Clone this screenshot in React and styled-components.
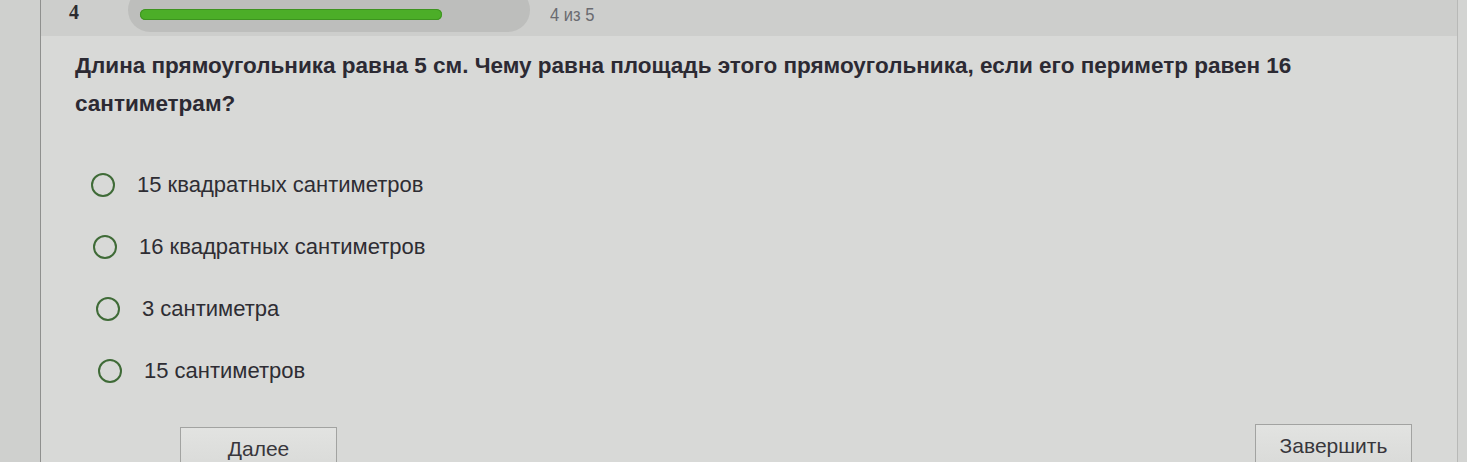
import React from "react";
import styled, { createGlobalStyle } from "styled-components";

const Global = createGlobalStyle`
  html, body { margin: 0; padding: 0; }
  body {
    background: #d3d4d2;
    font-family: "Liberation Sans", Arial, sans-serif;
    overflow: hidden;
  }
`;

const Page = styled.div`
  display: flex;
  width: 1467px;
  height: 462px;
  overflow: hidden;
`;

const Margin = styled.div`
  width: 40px;
  flex: none;
  background: #cfd0ce;
  border-right: 1px solid #8f908e;
`;

const Main = styled.div`
  flex: 1;
  display: flex;
  flex-direction: column;
  background: #d8d9d7;
  border-right: 1px solid #b8b9b7;
  margin-right: 9px;
`;

const TopBar = styled.div`
  height: 36px;
  flex: none;
  display: flex;
  align-items: flex-start;
  background: #cdcecc;
  padding-left: 28px;
`;

const Number = styled.div`
  width: 59px;
  font-family: "Liberation Serif", "Times New Roman", serif;
  font-weight: bold;
  font-size: 20px;
  color: #2b2b30;
  line-height: 24px;
`;

const Track = styled.div`
  width: 402px;
  height: 44px;
  margin-top: -12px;
  border-radius: 22px;
  background: #bdbebc;
  display: flex;
  align-items: flex-start;
  padding: 21px 12px 0;
  box-sizing: border-box;
`;

const Fill = styled.div`
  height: 11px;
  border-radius: 6px;
  background: #4cae28;
  box-shadow: inset 0 0 0 1px #3e9420;
`;

const Counter = styled.div`
  margin-left: 20px;
  font-size: 18px;
  color: #6a6b70;
  line-height: 30px;
  transform: scaleX(0.92);
  transform-origin: left;
`;

const Question = styled.div`
  width: 1330px;
  padding: 11px 0 0 34px;
  font-weight: bold;
  font-size: 22.5px;
  line-height: 38px;
  color: #2c2a33;
`;

const Options = styled.div`
  display: flex;
  flex-direction: column;
  gap: 38px;
  padding: 50px 0 0 50px;
`;

const Option = styled.label`
  display: flex;
  align-items: center;
  gap: 22px;
  height: 24px;
  padding-left: ${(p) => p.$shift}px;
  font-size: 22px;
  color: #2e2d33;
  cursor: pointer;
`;

const Radio = styled.span`
  width: 20px;
  height: 20px;
  border-radius: 50%;
  border: 2px solid #3f6b37;
  flex: none;
`;

const Buttons = styled.div`
  display: flex;
  justify-content: space-between;
  align-items: flex-start;
  padding: 41px 45px 0 139px;
`;

const Button = styled.button`
  width: 157px;
  height: 44px;
  margin-top: ${(p) => p.$top}px;
  background: linear-gradient(#e2e3e1, #d9dad8);
  border: 1px solid #a2a3a1;
  border-radius: 0;
  font-family: "Liberation Sans", Arial, sans-serif;
  font-size: 21px;
  color: #38373c;
  padding: 10px 0 0;
  line-height: 22px;
  display: flex;
  justify-content: center;
  align-items: flex-start;
`;

const answers = [
  { text: "15 квадратных сантиметров", shift: 0 },
  { text: "16 квадратных сантиметров", shift: 2 },
  { text: "3 сантиметра", shift: 5 },
  { text: "15 сантиметров", shift: 7 },
];

export default function App() {
  return (
    <>
      <Global />
      <Page>
        <Margin />
        <Main>
          <TopBar>
            <Number>4</Number>
            <Track>
              <Fill style={{ width: `${(4 / 5) * 100}%` }} />
            </Track>
            <Counter>4 из 5</Counter>
          </TopBar>
          <Question>
            Длина прямоугольника равна 5 см. Чему равна площадь этого
            прямоугольника, если его периметр равен 16 сантиметрам?
          </Question>
          <Options>
            {answers.map((a) => (
              <Option key={a.text} $shift={a.shift}>
                <Radio />
                {a.text}
              </Option>
            ))}
          </Options>
          <Buttons>
            <Button $top={3}>Далее</Button>
            <Button $top={0}>Завершить</Button>
          </Buttons>
        </Main>
      </Page>
    </>
  );
}
